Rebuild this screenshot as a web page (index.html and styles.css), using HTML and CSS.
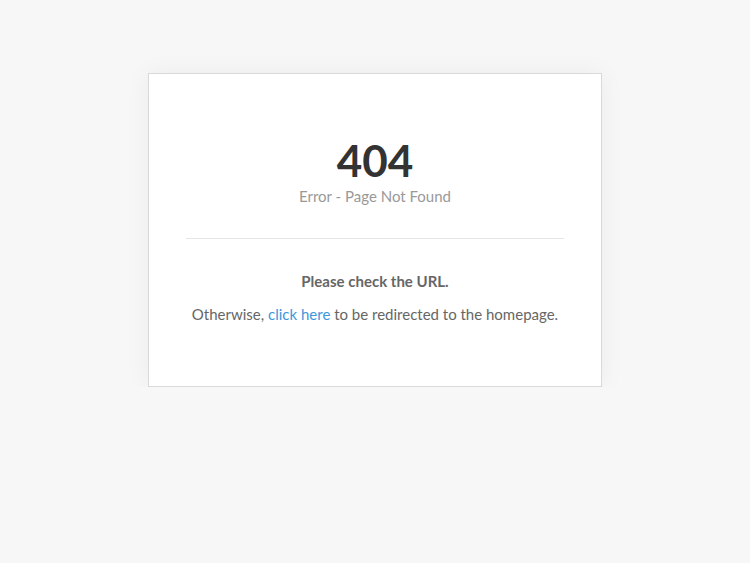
FILE: index.html
```html
<!DOCTYPE html>
<html lang="en">
<head>
    <meta charset="UTF-8">
    <meta name="viewport" content="width=device-width, initial-scale=1.0">
    <title>404 - Page Not Found</title>
    <link rel="stylesheet" href="styles.css">
</head>
<body>
    <div class="page">
        <div class="error-card">
            <div class="error-head">
                <h1>404</h1>
                <p>Error - Page Not Found</p>
            </div>
            <hr class="divider">
            <div class="error-body">
                <p class="hint">Please check the URL.</p>
                <p>Otherwise, <a href="/">click here</a> to be redirected to the homepage.</p>
            </div>
        </div>
    </div>
</body>
</html>
```

FILE: styles.css
```css
/* 全局样式 */
* {
    margin: 0;
    padding: 0;
    box-sizing: border-box;
}

body {
    background-color: #f7f7f7;
    color: #666;
    font-family: 'Lato', 'Open Sans', sans-serif;
    font-size: 15px;
    line-height: 1.5;
}

.page {
    display: flex;
    justify-content: center;
    padding-top: 73px;
}

/* 错误卡片 */
.error-card {
    width: 454px;
    height: 314px;
    background-color: #fff;
    border: 1px solid #d9d9d9;
    box-shadow: 0 0 24px rgba(0, 0, 0, 0.05);
    padding: 60px 37px 0;
    text-align: center;
}

.error-head h1 {
    font-size: 44px;
    font-weight: 700;
    color: #333;
    line-height: 52px;
}

.error-head p {
    color: #999;
    line-height: 20px;
}

.divider {
    border: none;
    border-top: 1px solid #e6e6e6;
    margin: 32px 0 32px;
}

.error-body p {
    line-height: 20px;
}

.error-body .hint {
    font-weight: 700;
    margin-bottom: 13px;
}

.error-body a {
    color: #3d97db;
    text-decoration: none;
}
```
